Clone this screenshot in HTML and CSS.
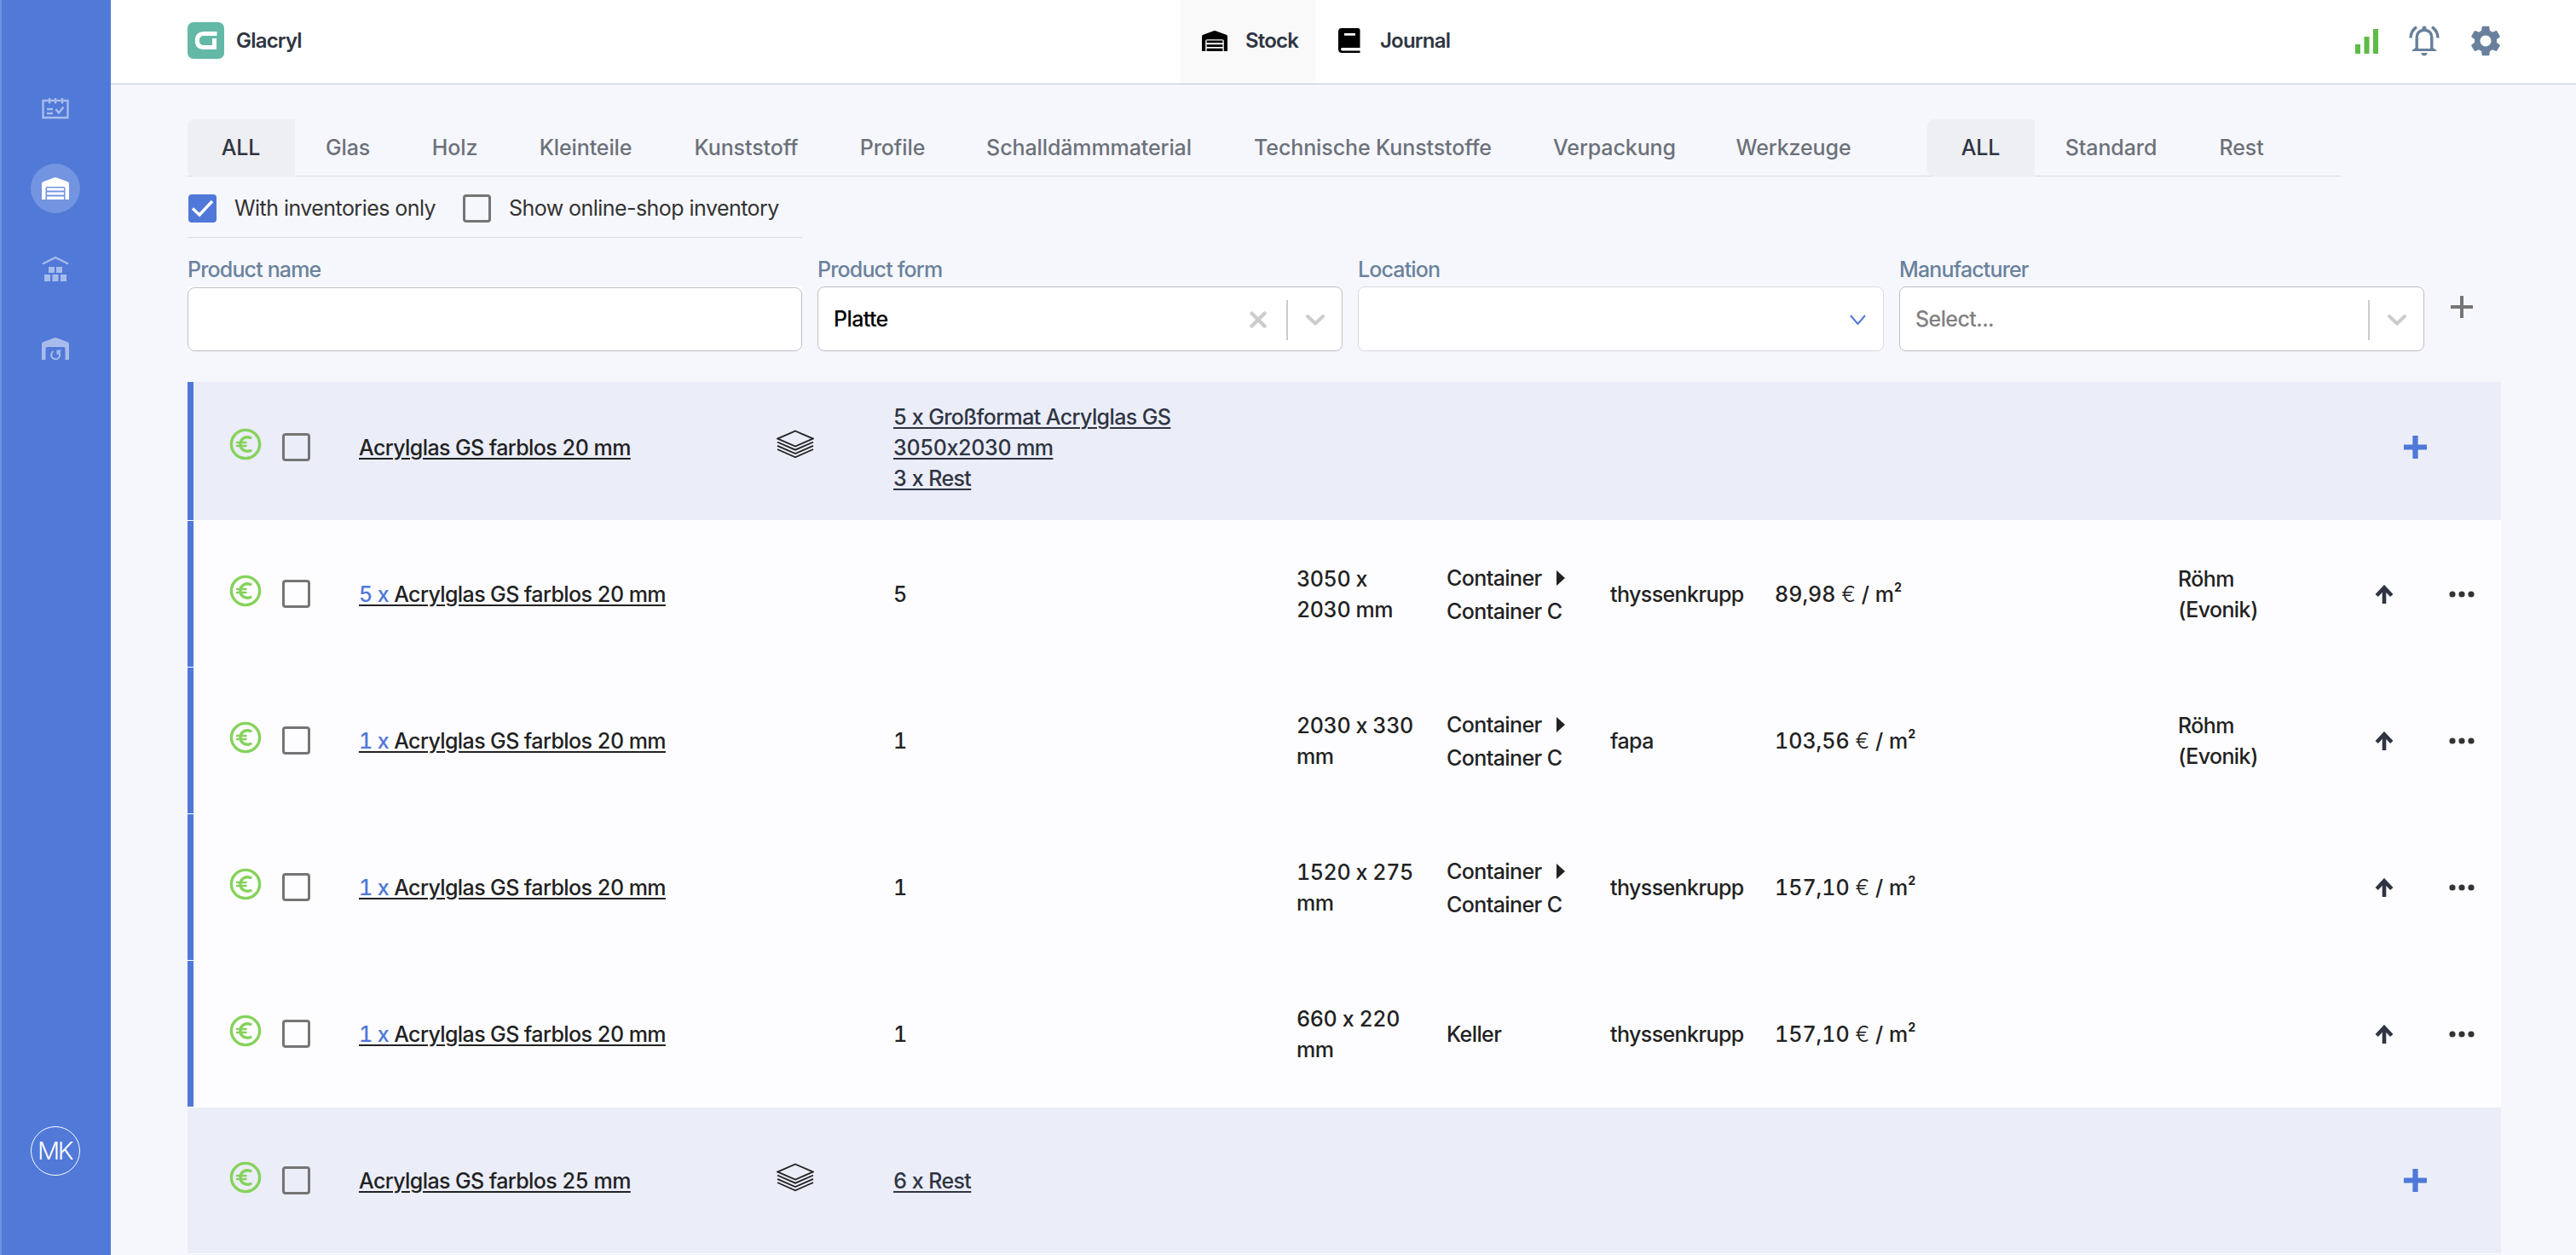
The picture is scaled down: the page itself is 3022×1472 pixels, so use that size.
FILE: index.html
```
<!DOCTYPE html>
<html lang="en">
<head>
    <meta charset="UTF-8">
    <meta name="viewport" content="width=device-width, initial-scale=1.0">
    <title>Glacryl - Stock</title>
    <link rel="stylesheet" href="styles.css">
</head>
<body>
    <!-- icon set -->
    <svg class="sprite">
        <symbol id="warehouse" viewBox="0 0 32 26">
            <path fill="currentColor" d="M0 26V7.5Q0 5.800 1.500 5.200L14.700 .3Q16 -.2 17.300 .3L30.500 5.200Q32 5.800 32 7.500V26H27.500V13Q27.500 11 25.500 11H6.500Q4.500 11 4.500 13V26Z"/>
            <path fill="currentColor" d="M6 12.500H26V15.500H6ZM6 17.500H26V20.500H6ZM6 22.500H26V26H6Z"/>
        </symbol>
        <symbol id="euro" viewBox="0 0 38 38">
            <circle cx="19" cy="19" r="16.600" fill="none" stroke="currentColor" stroke-width="3.400"/>
            <path fill="none" stroke="currentColor" stroke-width="3.400" stroke-linecap="round" d="M25 11.500C19 9.200 13 12.500 13 19S19 28.800 25 26.500"/>
            <path stroke="currentColor" stroke-width="2.600" stroke-linecap="round" d="M9 17H19.500M9 21H19.500"/>
        </symbol>
        <symbol id="layers" viewBox="0 0 44 34">
            <g fill="none" stroke="currentColor" stroke-width="1.900">
                <path d="M22 1.500L42.500 10.500L22 19.500L1.500 10.500Z"/>
                <path d="M1 14.500L22 23.700L43 14.500M1 18.800L22 28L43 18.800M1 23L22 32.300L43 23"/>
            </g>
        </symbol>
        <symbol id="up" viewBox="0 0 22 22">
            <path d="M11 22V4M2.200 12.500L11 3.200L19.800 12.500" fill="none" stroke="currentColor" stroke-width="4.600"/>
        </symbol>
        <symbol id="dots" viewBox="0 0 30 8">
            <circle cx="4" cy="4" r="3.600"/><circle cx="15" cy="4" r="3.600"/><circle cx="26" cy="4" r="3.600"/>
        </symbol>
        <symbol id="chevron" viewBox="0 0 22 13">
            <path d="M2 2L11 10.500L20 2" fill="none" stroke="currentColor" stroke-width="4" stroke-linecap="round" stroke-linejoin="round"/>
        </symbol>
        <symbol id="plus" viewBox="0 0 26 26">
            <path d="M13 0V26M0 13H26" stroke="currentColor"/>
        </symbol>
    </svg>

    <div class="app">
        <nav class="sidebar">
            <a class="side-link">
                <svg width="32" height="26" viewBox="0 0 32 26">
                    <path fill="none" stroke="currentColor" stroke-width="2.400" d="M1.500 4H30.500V24H1.500Z"/>
                    <path stroke="currentColor" stroke-width="2.400" d="M9 1V7.500M16 1V7.500M24 1V7.500M6 14H13M6 19H13"/>
                    <path fill="none" stroke="currentColor" stroke-width="2.400" d="M16.500 14L20 18.500L25.500 11.500"/>
                </svg>
            </a>
            <a class="side-link active"><svg width="32" height="26"><use href="#warehouse"/></svg></a>
            <a class="side-link">
                <svg width="32" height="30" viewBox="0 0 32 30">
                    <path fill="none" stroke="currentColor" stroke-width="2.400" d="M1 9.500L16 2L31 9.500"/>
                    <path fill="currentColor" d="M8 13H15V20H8ZM17 13H24V20H17ZM3 22H10V30H3ZM12.500 22H19.500V30H12.500ZM22 22H29V30H22Z"/>
                </svg>
            </a>
            <a class="side-link">
                <svg width="32" height="26" viewBox="0 0 32 26">
                    <path fill="currentColor" d="M0 26V7.500Q0 5.800 1.500 5.200L14.700 .3Q16 -.2 17.300 .3L30.500 5.200Q32 5.800 32 7.500V26H27.500V13Q27.500 11 25.500 11H6.500Q4.500 11 4.500 13V26Z"/>
                    <path fill="none" stroke="currentColor" stroke-width="2" d="M13.500 16A5 5 0 1 0 20 17M22.500 15.500H18.500V20"/>
                </svg>
            </a>
            <div class="avatar">MK</div>
        </nav>

        <div class="main">
            <header class="header">
                <div class="brand">
                    <svg width="43" height="43" viewBox="0 0 43 43">
                        <rect width="43" height="43" rx="7" fill="#63b8a6"/>
                        <path fill="none" stroke="#fff" stroke-width="5" d="M34.500 13.500H19.500Q11.300 13.500 11.300 21.500T19.500 29.500H31.500V19"/>
                    </svg>
                    <span>Glacryl</span>
                </div>
                <div class="header-tabs">
                    <a class="header-tab active">
                        <svg width="30" height="24" viewBox="0 0 32 26" preserveAspectRatio="none"><use href="#warehouse" width="32" height="26"/></svg>
                        <span>Stock</span>
                    </a>
                    <a class="header-tab journal">
                        <svg width="26" height="29" viewBox="0 0 26 29">
                            <path d="M4 0H23Q25.500 0 25.500 2.500V23H4.500Q3 23 3 24.500T4.500 26.500H25.500V29H4.500Q0 29 0 24.500V4Q0 0 4 0Z"/>
                            <path fill="#fff" d="M7 6H20V8.700H7Z"/>
                        </svg>
                        <span>Journal</span>
                    </a>
                </div>
                <div class="header-icons">
                    <svg width="28" height="29" viewBox="0 0 28 29">
                        <path fill="#5dbb46" d="M0 18H6V29H0ZM10.500 9H16.500V29H10.500ZM21 0H27V29H21Z"/>
                    </svg>
                    <svg class="bell" width="36" height="36" viewBox="0 0 36 36">
                        <g fill="none" stroke="currentColor" stroke-width="3.400">
                            <path d="M9.200 29V15.500Q9.200 5.500 18 5.500T26.800 15.500V29"/>
                            <path d="M9 1.800Q2.300 6 2 14.500M27 1.800Q33.700 6 34 14.500"/>
                        </g>
                        <path fill="currentColor" d="M15.500 5V3Q15.500 .5 18 .5T20.500 3V5ZM3.500 30Q3.500 28.500 5 28L8 26H28L31 28Q32.500 28.500 32.500 30ZM14.200 32H21.800Q20.800 35.500 18 35.500T14.200 32Z"/>
                        <path fill="#fff" d="M11 14.500Q11 7.300 18 7.300T25 14.500V27H11Z"/>
                    </svg>
                    <svg class="gear" width="36" height="36" viewBox="2 2 20 20">
                        <path fill="currentColor" d="M19.140 12.940c.04-.3.060-.610.060-.940 0-.320-.020-.640-.070-.940l2.030-1.580c.180-.140.230-.410.120-.610l-1.920-3.320c-.120-.220-.370-.290-.590-.220l-2.390.960c-.5-.380-1.030-.7-1.620-.940l-.360-2.540c-.040-.240-.240-.410-.480-.410h-3.840c-.240 0-.430.170-.470.410l-.360 2.540c-.590.240-1.130.570-1.620.940l-2.390-.960c-.220-.080-.470 0-.590.220L2.740 8.870c-.120.210-.080.470.120.610l2.030 1.580c-.050.3-.090.630-.090.940s.020.640.070.940l-2.030 1.580c-.180.140-.230.410-.120.610l1.920 3.320c.120.220.370.290.590.220l2.390-.960c.5.380 1.030.7 1.620.940l.360 2.540c.050.240.240.410.480.410h3.840c.240 0 .440-.170.470-.410l.360-2.540c.590-.240 1.130-.560 1.620-.940l2.390.960c.220.080.470 0 .590-.220l1.920-3.320c.120-.220.070-.470-.120-.610l-2.010-1.580zM12 15.600c-1.980 0-3.600-1.620-3.600-3.600s1.620-3.600 3.600-3.600 3.600 1.620 3.600 3.600-1.620 3.600-3.600 3.600z"/>
                    </svg>
                </div>
            </header>

            <div class="content">
                <div class="tabs">
                    <a class="tab active">ALL</a>
                    <a class="tab">Glas</a>
                    <a class="tab">Holz</a>
                    <a class="tab">Kleinteile</a>
                    <a class="tab">Kunststoff</a>
                    <a class="tab">Profile</a>
                    <a class="tab">Schalldämmmaterial</a>
                    <a class="tab">Technische Kunststoffe</a>
                    <a class="tab">Verpackung</a>
                    <a class="tab">Werkzeuge</a>
                    <span></span>
                    <a class="tab active">ALL</a>
                    <a class="tab">Standard</a>
                    <a class="tab">Rest</a>
                </div>

                <div class="options">
                    <span class="checkbox checked"><svg width="33" height="33" viewBox="0 0 33 33"><path d="M5 16.500L13 24L28 8" fill="none" stroke="#fff" stroke-width="3.400"/></svg></span>
                    <span class="option-label first">With inventories only</span>
                    <span class="checkbox"></span>
                    <span class="option-label second">Show online-shop inventory</span>
                </div>

                <div class="filters">
                    <div class="field">
                        <label>Product name</label>
                        <div class="control-back"><div class="control input"></div></div>
                    </div>
                    <div class="field">
                        <label>Product form</label>
                        <div class="control">
                            <span class="value">Platte</span>
                            <svg class="clear" width="20" height="20" viewBox="0 0 20 20"><path d="M2.500 2.500L17.500 17.500M17.500 2.500L2.500 17.500" stroke="currentColor" stroke-width="4.400" stroke-linecap="round"/></svg>
                            <span class="separator"></span>
                            <svg class="arrow" width="22" height="13"><use href="#chevron"/></svg>
                        </div>
                    </div>
                    <div class="field">
                        <label>Location</label>
                        <div class="control location">
                            <svg width="19" height="13" viewBox="0 0 19 13"><path d="M1 1L9.500 11L18 1" fill="none" stroke="#4f78d8" stroke-width="2"/></svg>
                        </div>
                    </div>
                    <div class="field">
                        <label>Manufacturer</label>
                        <div class="control">
                            <span class="placeholder">Select...</span>
                            <span class="separator"></span>
                            <svg class="arrow" width="22" height="13"><use href="#chevron"/></svg>
                        </div>
                    </div>
                    <svg class="add-filter" width="26" height="26"><use href="#plus"/></svg>
                </div>

                <div class="table">
                    <div class="row group open first-row">
                        <svg class="euro" width="38" height="38"><use href="#euro"/></svg>
                        <span class="checkbox"></span>
                        <a class="name">Acrylglas GS farblos 20 mm</a>
                        <svg class="layers" width="44" height="34"><use href="#layers"/></svg>
                        <a class="summary">5 x Großformat Acrylglas GS<br>3050x2030 mm<br>3 x Rest</a>
                        <svg class="add" width="27" height="27"><use href="#plus"/></svg>
                    </div>
                    <div class="row open">
                        <svg class="euro" width="38" height="38"><use href="#euro"/></svg>
                        <span class="checkbox"></span>
                        <a class="name"><b>5 x</b> Acrylglas GS farblos 20 mm</a>
                        <span></span>
                        <span>5</span>
                        <span class="size">3050 x<br>2030 mm</span>
                        <span class="place">Container <i class="caret"></i><br>Container C</span>
                        <span>thyssenkrupp</span>
                        <span class="price">89,98 <em>€</em> / m<sup>2</sup></span>
                        <span>Röhm<br>(Evonik)</span>
                        <svg class="up" width="22" height="22"><use href="#up"/></svg>
                        <svg class="dots" width="30" height="8"><use href="#dots"/></svg>
                    </div>
                    <div class="row open">
                        <svg class="euro" width="38" height="38"><use href="#euro"/></svg>
                        <span class="checkbox"></span>
                        <a class="name"><b>1 x</b> Acrylglas GS farblos 20 mm</a>
                        <span></span>
                        <span>1</span>
                        <span class="size">2030 x 330<br>mm</span>
                        <span class="place">Container <i class="caret"></i><br>Container C</span>
                        <span>fapa</span>
                        <span class="price">103,56 <em>€</em> / m<sup>2</sup></span>
                        <span>Röhm<br>(Evonik)</span>
                        <svg class="up" width="22" height="22"><use href="#up"/></svg>
                        <svg class="dots" width="30" height="8"><use href="#dots"/></svg>
                    </div>
                    <div class="row open">
                        <svg class="euro" width="38" height="38"><use href="#euro"/></svg>
                        <span class="checkbox"></span>
                        <a class="name"><b>1 x</b> Acrylglas GS farblos 20 mm</a>
                        <span></span>
                        <span>1</span>
                        <span class="size">1520 x 275<br>mm</span>
                        <span class="place">Container <i class="caret"></i><br>Container C</span>
                        <span>thyssenkrupp</span>
                        <span class="price">157,10 <em>€</em> / m<sup>2</sup></span>
                        <span></span>
                        <svg class="up" width="22" height="22"><use href="#up"/></svg>
                        <svg class="dots" width="30" height="8"><use href="#dots"/></svg>
                    </div>
                    <div class="row open">
                        <svg class="euro" width="38" height="38"><use href="#euro"/></svg>
                        <span class="checkbox"></span>
                        <a class="name"><b>1 x</b> Acrylglas GS farblos 20 mm</a>
                        <span></span>
                        <span>1</span>
                        <span class="size">660 x 220<br>mm</span>
                        <span>Keller</span>
                        <span>thyssenkrupp</span>
                        <span class="price">157,10 <em>€</em> / m<sup>2</sup></span>
                        <span></span>
                        <svg class="up" width="22" height="22"><use href="#up"/></svg>
                        <svg class="dots" width="30" height="8"><use href="#dots"/></svg>
                    </div>
                    <div class="row group">
                        <svg class="euro" width="38" height="38"><use href="#euro"/></svg>
                        <span class="checkbox"></span>
                        <a class="name">Acrylglas GS farblos 25 mm</a>
                        <svg class="layers" width="44" height="34"><use href="#layers"/></svg>
                        <a class="summary">6 x Rest</a>
                        <svg class="add" width="27" height="27"><use href="#plus"/></svg>
                    </div>
                    <div class="row group"></div>
                </div>
            </div>
        </div>
    </div>
</body>
</html>
```

FILE: styles.css
```
* {
    box-sizing: border-box;
}
body {
    margin: 0;
    font-family: Inter, "Liberation Sans", sans-serif;
    font-size: 25px;
    font-weight: 500;
    line-height: 36px;
    color: #222;
    background-color: #f6f7fc;
}
svg {
    display: block;
    flex: none;
}
.sprite {
    display: none;
}
.app {
    display: flex;
    height: 1472px;
    overflow: hidden;
}

/* sidebar */
.sidebar {
    display: flex;
    flex-direction: column;
    align-items: center;
    flex: none;
    width: 130px;
    padding: 98px 2px 93px 0;
    gap: 36px;
    background-color: #5079d8;
    border-left: 2px solid #7192df;
}
.side-link {
    display: flex;
    align-items: center;
    justify-content: center;
    width: 58px;
    height: 58px;
    border-radius: 50%;
    color: #a8bcec;
}
.side-link.active {
    color: #fff;
    background-color: #7394e0;
}
.avatar {
    margin-top: auto;
    width: 58px;
    height: 58px;
    line-height: 56px;
    text-align: center;
    font-size: 29px;
    font-weight: 300;
    letter-spacing: -2.5px;
    text-indent: -2px;
    color: #fff;
    border: 1px solid #fff;
    border-radius: 50%;
}

/* header */
.main {
    flex: 1;
}
.header {
    display: grid;
    grid-template-columns: 1165px 1fr 171px;
    height: 99px;
    padding: 0 88px 0 90px;
    background-color: #fff;
    border-bottom: 1px solid #b9c7d8;
    font-size: 24px;
    font-weight: 600;
    letter-spacing: -0.8px;
    color: #2f3542;
}
.brand {
    display: flex;
    align-items: center;
    gap: 14px;
    padding-bottom: 3px;
}
.header-tabs {
    display: flex;
}
.header-tab {
    display: flex;
    align-items: center;
    gap: 21px;
    height: 98px;
    padding: 0 25px 3px;
}
.header-tab.active {
    width: 158px;
    background-color: #f9f9f9;
}
.header-tab.journal {
    gap: 23px;
    padding-left: 27px;
}
.header-tab svg {
    color: #000;
}
.header-icons {
    display: flex;
    align-items: center;
    padding-bottom: 2px;
    color: #68809b;
}
.bell {
    margin-left: 35px;
}
.gear {
    margin-left: 36px;
}

/* filters */
.content {
    padding: 41px 88px 0 90px;
}
.tabs {
    display: grid;
    grid-template-columns: 126px 125px 126px 181px 196px 147px 314px 352px 215px 205px 54px 126px 180px 126px;
    width: 2526px;
    height: 67px;
    border-bottom: 1px solid #d9dbe0;
}
.tab {
    height: 67px;
    padding-right: 1px;
    line-height: 67px;
    text-align: center;
    letter-spacing: -0.1px;
    white-space: nowrap;
    color: #6c717a;
}
.tab.active {
    color: #2f3542;
    background-color: #eeeff3;
    border-radius: 8px 0 0 8px;
}
.options {
    display: flex;
    align-items: center;
    width: 721px;
    height: 72px;
    padding: 3px 0 0 1px;
    border-bottom: 1px solid #d9dbe0;
    font-weight: 400;
    white-space: nowrap;
    color: #333;
}
.option-label {
    margin-left: 21px;
    letter-spacing: -0.55px;
}
.option-label.first {
    width: 268px;
}
.checkbox {
    flex: none;
    width: 33px;
    height: 33px;
    border: 3px solid #757575;
    border-radius: 4px;
}
.checkbox.checked {
    border: none;
    background-color: #4f78d8;
}
.filters {
    display: grid;
    grid-template-columns: 721px 616px 617px 616px 26px;
    gap: 18px;
    padding-top: 19px;
}
.field label {
    display: block;
    height: 38px;
    line-height: 37px;
    font-size: 25px;
    letter-spacing: -0.85px;
    color: #6a829c;
}
.control-back {
    padding-top: 1px;
    background-color: #fff;
}
.control {
    display: flex;
    align-items: center;
    height: 76px;
    padding: 2px 20px 0 18px;
    background-color: #fff;
    border: 1px solid #bdbfc3;
    border-radius: 8px;
    color: #ccc;
}
.control.input {
    height: 75px;
}
.control.location {
    justify-content: flex-end;
    border-color: #d9dadd;
}
.value, .placeholder {
    flex: 1;
    letter-spacing: -0.6px;
    padding-bottom: 3px;
    color: #000;
}
.placeholder {
    color: #808080;
}
.separator {
    width: 2px;
    height: 47px;
    margin-left: 23px;
    background-color: #ccc;
}
.arrow {
    margin-left: 21px;
}
.add-filter {
    margin-top: 49px;
    margin-left: 13px;
    color: #757575;
    stroke-width: 4;
}

/* stock table */
.table {
    width: 2714px;
    margin-top: 36px;
    background-color: #fff;
}
.row {
    display: grid;
    grid-template-columns: 62px 90px 490px 137px 473px 176px 192px 193px 473px 231px 87px 1fr;
    align-items: center;
    height: 171px;
    margin-bottom: 1px;
    padding-left: 42px;
    border-left: 7px solid #ebedf9;
    background-color: #fdfdff;
    letter-spacing: -0.6px;
    font-variant-numeric: tabular-nums;
    white-space: nowrap;
}
.row.group {
    background-color: #ebedf9;
}
.row.open {
    border-left-color: #4f78d8;
}
.first-row {
    height: 162px;
    padding-bottom: 9px;
}
.name, .summary {
    text-decoration: underline;
    text-decoration-thickness: 2px;
    text-underline-offset: 3px;
}
.name b {
    font-weight: 500;
    color: #4f78d8;
}
.summary {
    color: #2f3542;
}
.size {
    letter-spacing: -0.4px;
}
.euro {
    margin-bottom: 8px;
    color: #86d25c;
}
.layers {
    margin-bottom: 7px;
}
.place {
    line-height: 39px;
    padding-top: 3px;
}
.caret {
    display: inline-block;
    margin-left: 11px;
    border-left: 10px solid #222;
    border-top: 9px solid transparent;
    border-bottom: 9px solid transparent;
}
.price {
    letter-spacing: 0;
}
.price em {
    font-style: normal;
    font-weight: 300;
}
.price sup {
    font-size: 14px;
    font-weight: 700;
    line-height: 0;
    vertical-align: 12px;
}
.up {
    color: #2f3542;
}
.dots {
    fill: #333;
}
.add {
    grid-column: 11;
    margin-left: 34px;
    color: #4f78d8;
    stroke-width: 6;
}
```
